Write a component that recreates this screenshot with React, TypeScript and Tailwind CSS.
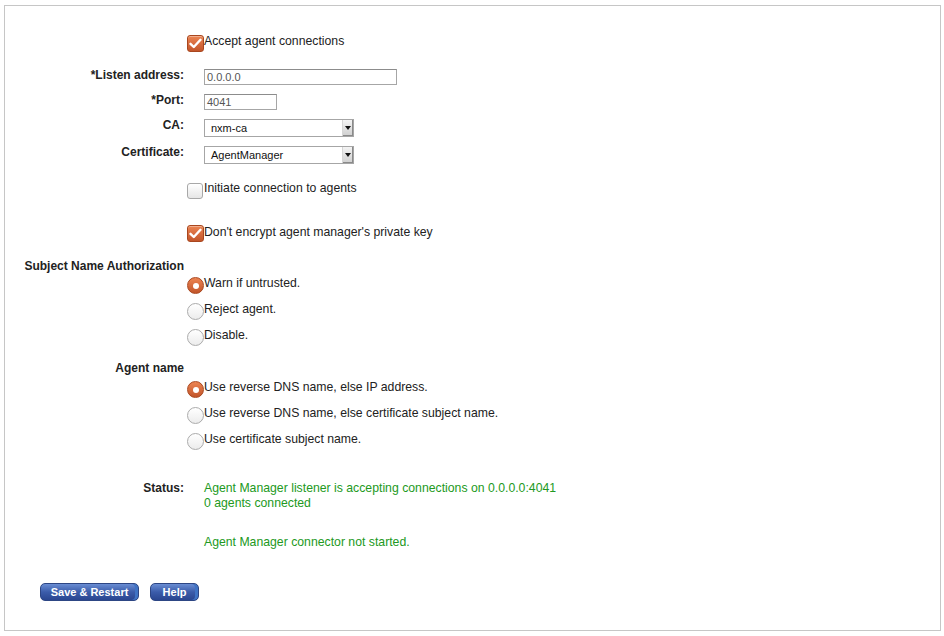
import type { ReactNode } from "react"

const font = { fontFamily: '"Liberation Sans", Arial, sans-serif' }

function CheckBox({ checked }: { checked?: boolean }) {
  if (checked) {
    return (
      <span className="inline-flex h-[17px] w-[17px] shrink-0 items-center justify-center rounded-[3px] border border-[#a9471f] bg-gradient-to-b from-[#ec8452] to-[#c2552a] shadow-[inset_0_1px_0_rgba(255,255,255,0.35)]">
        <svg width="13" height="11" viewBox="0 0 13 11">
          <path d="M1.5 5.8 L4.8 9 L11.5 1.8" fill="none" stroke="#fff" strokeWidth="2.4" strokeLinecap="round" strokeLinejoin="round" />
        </svg>
      </span>
    )
  }
  return (
    <span className="mr-[1px] inline-block h-[16px] w-[16px] shrink-0 rounded-[3px] border border-[#a8a8a8] bg-gradient-to-b from-[#ffffff] to-[#e6e6e6]" />
  )
}

function Radio({ checked }: { checked?: boolean }) {
  if (checked) {
    return (
      <span className="inline-flex h-[17px] w-[17px] shrink-0 items-center justify-center rounded-full border border-[#a9471f] bg-gradient-to-b from-[#ec8452] to-[#c2552a]">
        <span className="h-[6px] w-[6px] rounded-full bg-white" />
      </span>
    )
  }
  return (
    <span className="inline-block h-[17px] w-[17px] shrink-0 rounded-full border border-[#ababab] bg-gradient-to-b from-[#ffffff] to-[#ececec]" />
  )
}

function Row({ label, h, children }: { label?: string; h: string; children?: ReactNode }) {
  return (
    <div className={`flex ${h}`}>
      <div className="w-[179px] shrink-0 text-right text-[12px] font-bold text-[#222]">{label}</div>
      <div className="ml-[3px] flex-1">{children}</div>
    </div>
  )
}

function Select({ value }: { value: string }) {
  return (
    <div className="ml-[17px] mt-[1px] flex h-[18px] w-[150px] items-stretch border border-[#a6a6a6] bg-white">
      <span className="flex-1 pl-[6px] text-[11px] leading-[16px] text-[#111]">{value}</span>
      <span className="flex w-[11px] items-center justify-center border-l border-[#d6d6d6] bg-gradient-to-b from-[#f4f4f4] to-[#cfcfcf] shadow-[inset_-1px_-1px_0_#8a8a8a]">
        <svg width="6" height="4" viewBox="0 0 6 4">
          <path d="M0 0 H6 L3 4 Z" fill="#111" />
        </svg>
      </span>
    </div>
  )
}

export default function App() {
  return (
    <div className="h-[636px] w-[944px] bg-white pl-[4px] pt-[5px] text-[12.25px] leading-[14px] text-[#222]" style={font}>
      <div className="h-[626px] w-[937px] border border-[#c6c6c6] pt-[28px]">
        <Row h="h-[34px]">
          <label className="flex items-start">
            <span className="mt-[1px]"><CheckBox checked /></span>
            <span>Accept agent connections</span>
          </label>
        </Row>
        <Row label="*Listen address:" h="h-[25px]">
          <div className="ml-[17px] mt-[1px] h-[16px] w-[193px] border border-[#a6a6a6] border-t-[#8c8c8c] pl-[2px] text-[11px] leading-[14px] text-[#555]">0.0.0.0</div>
        </Row>
        <Row label="*Port:" h="h-[25px]">
          <div className="ml-[17px] mt-[1px] h-[16px] w-[73px] border border-[#a6a6a6] border-t-[#8c8c8c] pl-[2px] text-[11px] leading-[14px] text-[#555]">4041</div>
        </Row>
        <Row label="CA:" h="h-[27px]">
          <Select value="nxm-ca" />
        </Row>
        <Row label="Certificate:" h="h-[36px]">
          <Select value="AgentManager" />
        </Row>
        <Row h="h-[44px]">
          <label className="flex items-start">
            <span className="mt-[2px]"><CheckBox /></span>
            <span>Initiate connection to agents</span>
          </label>
        </Row>
        <Row h="h-[34px]">
          <label className="flex items-start">
            <span className="mt-[0px]"><CheckBox checked /></span>
            <span>Don't encrypt agent manager's private key</span>
          </label>
        </Row>
        <div className="h-[17px] w-[179px] text-right text-[12px] font-bold">Subject Name Authorization</div>
        {[
          { text: "Warn if untrusted.", checked: true, h: "h-[26px]" },
          { text: "Reject agent.", checked: false, h: "h-[26px]" },
          { text: "Disable.", checked: false, h: "h-[33px]" },
        ].map((r) => (
          <Row key={r.text} h={r.h}>
            <label className="flex items-start">
              <span className="mt-[1px]"><Radio checked={r.checked} /></span>
              <span>{r.text}</span>
            </label>
          </Row>
        ))}
        <div className="h-[19px] w-[179px] text-right text-[12px] font-bold">Agent name</div>
        {[
          { text: "Use reverse DNS name, else IP address.", checked: true, h: "h-[26px]" },
          { text: "Use reverse DNS name, else certificate subject name.", checked: false, h: "h-[26px]" },
          { text: "Use certificate subject name.", checked: false, h: "h-[49px]" },
        ].map((r) => (
          <Row key={r.text} h={r.h}>
            <label className="flex items-start">
              <span className="mt-[1px]"><Radio checked={r.checked} /></span>
              <span>{r.text}</span>
            </label>
          </Row>
        ))}
        <Row label="Status:" h="h-[54px]">
          <div className="ml-[17px] leading-[15px] text-[#229922]">
            <div>Agent Manager listener is accepting connections on 0.0.0.0:4041</div>
            <div>0 agents connected</div>
          </div>
        </Row>
        <Row h="h-[48px]">
          <div className="ml-[17px] text-[#229922]">Agent Manager connector not started.</div>
        </Row>
        <div className="ml-[35px] flex gap-[11px]">
          <button className="h-[18px] w-[99px] rounded-[5px] border border-[#2d4684] bg-gradient-to-b from-[#6a8dd3] via-[#3b5caa] to-[#2a4690] text-[11px] font-bold leading-[15px] text-white shadow-[inset_-3px_0_0_#3f73c4]">
            Save &amp; Restart
          </button>
          <button className="h-[18px] w-[49px] rounded-[5px] border border-[#2d4684] bg-gradient-to-b from-[#6a8dd3] via-[#3b5caa] to-[#2a4690] text-[11px] font-bold leading-[15px] text-white shadow-[inset_-3px_0_0_#3f73c4]">
            Help
          </button>
        </div>
      </div>
    </div>
  )
}
